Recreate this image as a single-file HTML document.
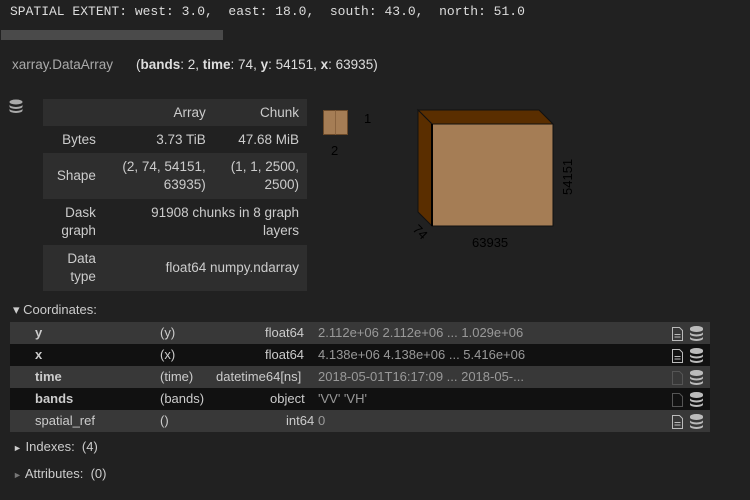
<!DOCTYPE html>
<html><head><style>
body{margin:0;width:750px;height:500px;background:#212121;color:#ccc;font-family:"Liberation Sans",sans-serif;position:relative;overflow:hidden;font-size:13px}
.a{position:absolute;white-space:nowrap}
.mono{font-family:"Liberation Mono",monospace;font-size:13px;color:#ddd;white-space:pre}
table{border-collapse:collapse;position:absolute;left:43px;top:99px;width:264px;font-size:13.5px;color:#ccc}
td{text-align:right;padding:0 8px;vertical-align:middle;line-height:18px}
.r{position:absolute;left:10px;width:700px;height:22px;font-size:13px;line-height:22px}
.r span{position:absolute;top:0}
</style></head><body>
<div class="a mono" style="left:10px;top:4px">SPATIAL EXTENT: west: 3.0,  east: 18.0,  south: 43.0,  north: 51.0</div>
<div class="a" style="left:1px;top:30px;width:222px;height:10px;background:#4a4a4a"></div>
<div class="a" style="left:12px;top:57px;color:#aaa;font-size:13.5px">xarray.DataArray</div>
<div class="a" style="left:136px;top:57px;color:#ddd;font-size:13.5px">(<b>bands</b>: 2, <b>time</b>: 74, <b>y</b>: 54151, <b>x</b>: 63935)</div>
<svg class="a" style="left:9px;top:99px" width="16" height="14"><ellipse cx="7" cy="3" rx="6.5" ry="2.5" fill="#aaa"/><path d="M0.5 5.5a6.5 2.5 0 0 0 13 0v2a6.5 2.5 0 0 1-13 0z M0.5 9.5a6.5 2.5 0 0 0 13 0v2a6.5 2.5 0 0 1-13 0z" fill="#aaa"/></svg>
<table>
<tr style="background:#2e2e2e;height:27px"><td></td><td>Array</td><td>Chunk</td></tr>
<tr style="height:27px"><td>Bytes</td><td>3.73 TiB</td><td>47.68 MiB</td></tr>
<tr style="background:#2e2e2e;height:46px"><td>Shape</td><td>(2, 74, 54151,<br>63935)</td><td>(1, 1, 2500,<br>2500)</td></tr>
<tr style="height:46px"><td>Dask<br>graph</td><td colspan="2">91908 chunks in 8 graph<br>layers</td></tr>
<tr style="background:#2e2e2e;height:46px"><td>Data<br>type</td><td colspan="2">float64 numpy.ndarray</td></tr>
</table>
<svg class="a" style="left:320px;top:105px" width="260" height="150">
<rect x="3.5" y="5.5" width="24" height="24" fill="#a57d55" stroke="#6b4a2a"/><line x1="15.5" y1="5.5" x2="15.5" y2="29.5" stroke="#8a6440"/>
<text x="44" y="18" font-size="13" fill="#000" font-family="Liberation Sans">1</text>
<text x="11" y="50" font-size="13" fill="#000" font-family="Liberation Sans">2</text>
<polygon points="98,5 219,5 233,19 112,19" fill="#5a2e00" stroke="#111"/>
<polygon points="98,5 112,19 112,121 98,107" fill="#5a2e00" stroke="#111"/>
<rect x="112" y="19" width="121" height="102" fill="#a57d55" stroke="#111"/>
<line x1="112" y1="19" x2="112" y2="121" stroke="#000" stroke-width="2"/>
<text x="152" y="142" font-size="13" fill="#000" font-family="Liberation Sans">63935</text>
<text transform="translate(252,90) rotate(-90)" font-size="13" fill="#000" font-family="Liberation Sans">54151</text>
<text transform="translate(92,125) rotate(45)" font-size="13" fill="#000" font-family="Liberation Sans">74</text>
</svg>
<div class="a" style="left:13px;top:302px;color:#ccc">▾ Coordinates:</div>
<div class="r" style="top:322px;background:#383838"><span style="left:25px;font-weight:bold">y</span><span style="left:150px">(y)</span><span style="left:255px">float64</span><span style="left:308px;color:#999">2.112e+06 2.112e+06 ... 1.029e+06</span></div>
<div class="r" style="top:344px;background:#111"><span style="left:25px;font-weight:bold">x</span><span style="left:150px">(x)</span><span style="left:255px">float64</span><span style="left:308px;color:#999">4.138e+06 4.138e+06 ... 5.416e+06</span></div>
<div class="r" style="top:366px;background:#383838"><span style="left:25px;font-weight:bold">time</span><span style="left:150px">(time)</span><span style="left:206px">datetime64[ns]</span><span style="left:308px;color:#999">2018-05-01T16:17:09 ... 2018-05-...</span></div>
<div class="r" style="top:388px;background:#111"><span style="left:25px;font-weight:bold">bands</span><span style="left:150px">(bands)</span><span style="left:260px">object</span><span style="left:308px;color:#999">'VV' 'VH'</span></div>
<div class="r" style="top:410px;background:#383838"><span style="left:25px">spatial_ref</span><span style="left:150px">()</span><span style="left:276px">int64</span><span style="left:308px;color:#999">0</span></div>
<svg class="a" style="left:670px;top:322px" width="40" height="110">
<g fill="none" stroke="#bbb"><path d="M2.5 5.5h7l3 3v10h-10z M4.5 12.5h6 M4.5 15h6"/><path d="M2.5 27.5h7l3 3v10h-10z M4.5 34.5h6 M4.5 37h6"/><path d="M2.5 49.5h7l3 3v10h-10z" stroke="#555"/><path d="M2.5 71.5h7l3 3v10h-10z" stroke="#555"/><path d="M2.5 93.5h7l3 3v10h-10z M4.5 100.5h6 M4.5 103h6"/></g>
<g fill="#bbb"><path id="d" d="M20 6.5a6.5 2.5 0 0 1 13 0v1a6.5 2.5 0 0 1-13 0z M20 10a6.5 2.5 0 0 0 13 0v2a6.5 2.5 0 0 1-13 0z M20 14.5a6.5 2.5 0 0 0 13 0v2a6.5 2.5 0 0 1-13 0z"/><use href="#d" y="22"/><use href="#d" y="44"/><use href="#d" y="66"/><use href="#d" y="88"/></g>
</svg>
<div class="a" style="left:13px;top:439px;color:#ccc"><span style="font-size:9px">►</span> Indexes:&nbsp; (4)</div>
<div class="a" style="left:13px;top:466px;color:#ccc"><span style="font-size:9px;color:#777">►</span> Attributes:&nbsp; (0)</div>
</body></html>
